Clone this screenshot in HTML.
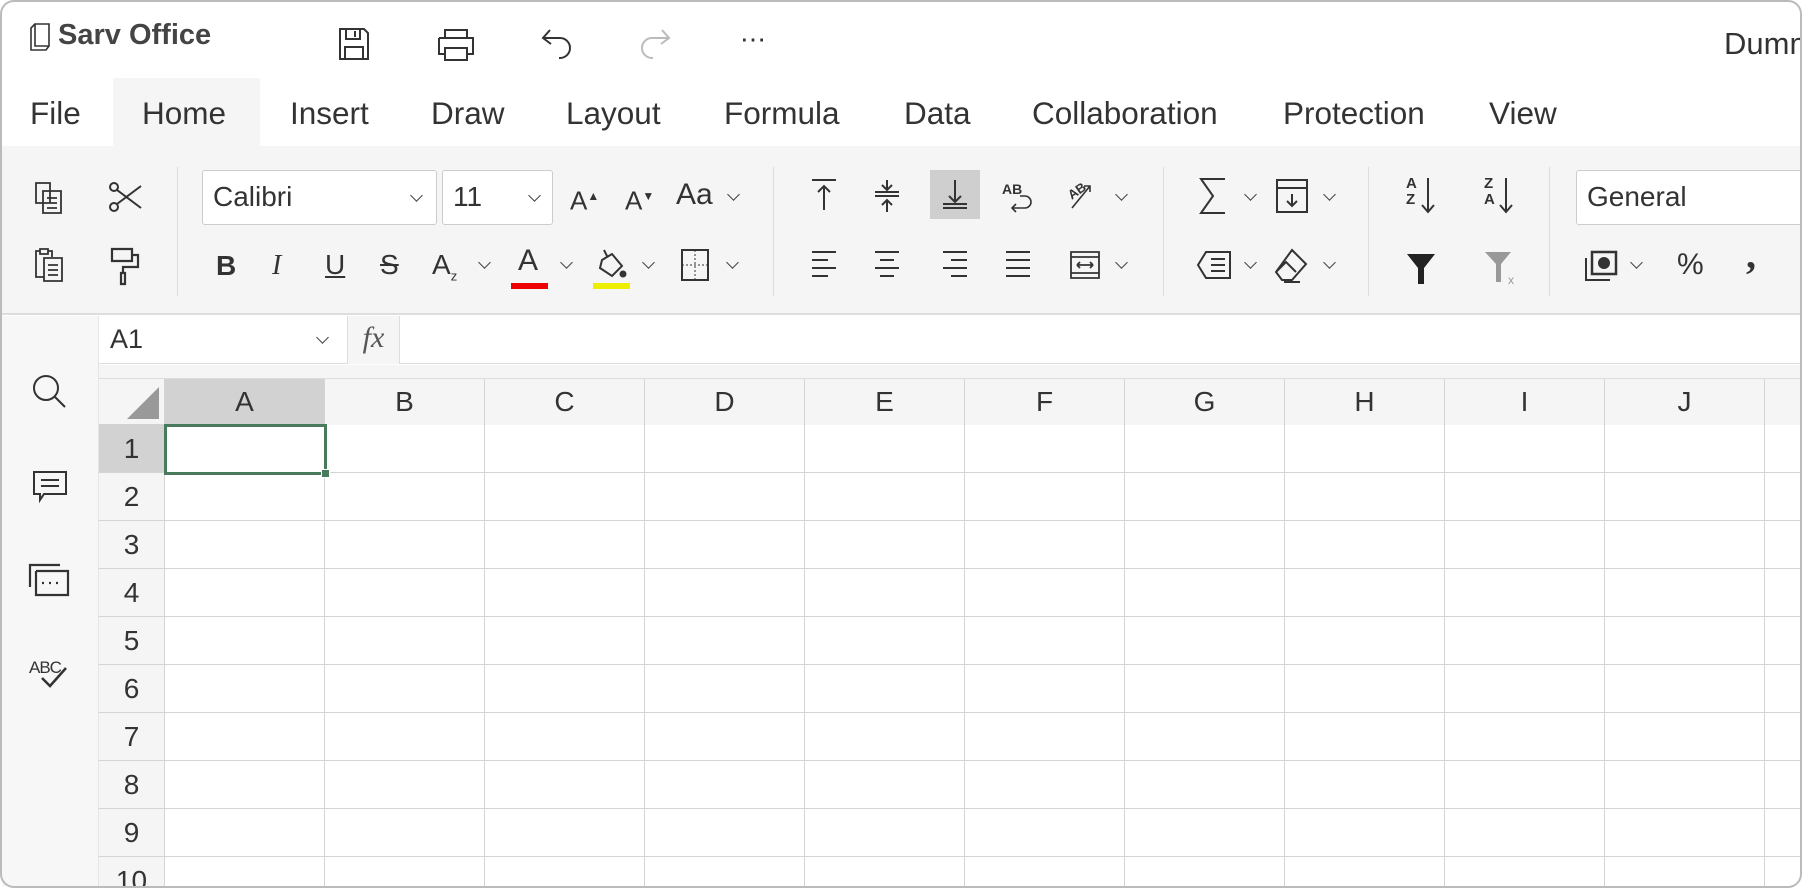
<!DOCTYPE html>
<html><head><meta charset="utf-8"><style>
*{margin:0;padding:0;box-sizing:border-box}
html,body{width:1802px;height:888px;overflow:hidden}
body{background:#fff;position:relative;font-family:"Liberation Sans",Arial,sans-serif;color:#333}
.a{position:absolute}
.menu{position:absolute;top:94px;font-size:31.5px;color:#333;line-height:38px}
svg{position:absolute;overflow:visible}
.ic{fill:none;stroke:#333;stroke-width:2}
.chev{position:absolute;width:9px;height:9px;border-right:1.6px solid #444;border-bottom:1.6px solid #444;transform:rotate(45deg)}
.ch{position:absolute;font-size:26px;line-height:30px}
.col{position:absolute;top:379px;height:46px;border-right:1px solid #d4d4d4;background:#f5f5f5;font-size:28px;text-align:center;line-height:46px;color:#333}
.row{position:absolute;left:99px;width:66px;height:48px;border-bottom:1px solid #d4d4d4;background:#f5f5f5;font-size:28px;text-align:center;line-height:48px;color:#333;border-right:1px solid #d4d4d4;overflow:hidden}
.sep{position:absolute;top:167px;width:1px;height:129px;background:#ddd}
</style></head><body>

<!-- title row -->
<svg style="left:30px;top:22px" width="26" height="30" class="ic"><path d="M5 2h14v22H5zM5 2L1 6v22h15l3-4" stroke-width="1.6"/></svg>
<div class="a" style="left:58px;top:19px;font-size:29px;font-weight:bold;color:#444">Sarv Office</div>
<svg style="left:338px;top:27px" width="32" height="34" class="ic"><path d="M2 2h24l4 4v26H2zM8 2v10h14V2M7 32V20h18v12M17 4v6"/></svg>
<svg style="left:437px;top:28px" width="38" height="34" class="ic"><path d="M8 10V2h22v8M2 10h34v16h-6M8 26H2V10M8 20h22v12H8z"/></svg>
<svg style="left:540px;top:28px" width="34" height="36" class="ic"><path d="M10 2L3 10l8 6M3 10h17a10 10 0 0 1 0 20h-1"/></svg>
<svg style="left:638px;top:28px" width="34" height="36" class="ic"><path d="M24 2l7 8-8 6M31 10H14a10 10 0 0 0 0 20h1" stroke="#bbb"/></svg>
<div class="a" style="left:740px;top:24px;font-size:26px">⋯</div>
<div class="a" style="left:1724px;top:26px;font-size:31px">Dummy</div>

<!-- menu -->
<div class="a" style="left:113px;top:78px;width:147px;height:69px;background:#f5f5f5"></div>
<div class="menu" style="left:30px">File</div>
<div class="menu" style="left:142px">Home</div>
<div class="menu" style="left:290px">Insert</div>
<div class="menu" style="left:431px">Draw</div>
<div class="menu" style="left:566px">Layout</div>
<div class="menu" style="left:724px">Formula</div>
<div class="menu" style="left:904px">Data</div>
<div class="menu" style="left:1032px">Collaboration</div>
<div class="menu" style="left:1283px">Protection</div>
<div class="menu" style="left:1489px">View</div>

<!-- toolbar -->
<div class="a" style="left:2px;top:146px;width:1800px;height:169px;background:#f5f5f5;border-bottom:2px solid #ddd"></div>
<div class="sep" style="left:177px"></div><div class="sep" style="left:773px"></div><div class="sep" style="left:1163px"></div><div class="sep" style="left:1368px"></div><div class="sep" style="left:1549px"></div>

<!-- row1 -->
<svg style="left:34px;top:181px" width="32" height="34" class="ic"><path d="M2 2h14v20H2zM9 10h18v22H9zM13 17h10M13 22h10M13 27h10" stroke-width="1.8"/></svg>
<svg style="left:108px;top:180px" width="36" height="34" class="ic"><circle cx="6" cy="7" r="4"/><circle cx="6" cy="27" r="4"/><path d="M9 10l24 18M9 24L33 6"/></svg>
<div class="a" style="left:202px;top:170px;width:235px;height:55px;background:#fff;border:1.5px solid #ccc;border-radius:3px;font-size:28px;line-height:52px;padding-left:10px">Calibri</div>
<div class="chev" style="left:412px;top:191px"></div>
<div class="a" style="left:442px;top:170px;width:111px;height:55px;background:#fff;border:1.5px solid #ccc;border-radius:3px;font-size:28px;line-height:52px;padding-left:10px">11</div>
<div class="chev" style="left:530px;top:191px"></div>
<div class="ch" style="left:570px;top:181px">A<sup style="font-size:12px">▲</sup></div>
<div class="ch" style="left:625px;top:181px">A<sup style="font-size:12px">▼</sup></div>
<div class="ch" style="left:676px;top:180px;font-size:30px">Aa</div><div class="chev" style="left:729px;top:190px"></div>
<svg style="left:810px;top:178px" width="28" height="34" class="ic"><path d="M2 2h24M14 32V8M8 14l6-6 6 6"/></svg>
<svg style="left:873px;top:178px" width="28" height="36" class="ic"><path d="M2 18h24M2 14h24M14 2v10M9 7l5 5 5-5M14 34V22M9 27l5-5 5 5"/></svg>
<div class="a" style="left:930px;top:170px;width:50px;height:49px;background:#cfcfcf"></div>
<svg style="left:941px;top:178px" width="28" height="34" class="ic"><path d="M2 30h24M2 26h24M14 2v22M8 18l6 6 6-6"/></svg>
<div class="a" style="left:1002px;top:181px;font-size:14px;font-weight:bold">AB</div>
<svg style="left:1006px;top:194px" width="26" height="22" class="ic"><path d="M14 2h5a6 6 0 0 1 0 12H6M10 10l-4 4 4 4" stroke-width="1.6"/></svg>
<svg style="left:1068px;top:178px" width="30" height="36" class="ic"><path d="M4 30L22 8M16 8h6v6" stroke-width="1.6"/><text x="0" y="18" font-size="13" fill="#333" stroke="none" transform="rotate(-35 8 14)" font-weight="bold">AB</text></svg>
<div class="chev" style="left:1117px;top:190px"></div>
<svg style="left:1199px;top:177px" width="28" height="38" class="ic"><path d="M26 2H2l12 17L2 36h24"/></svg><div class="chev" style="left:1246px;top:190px"></div>
<svg style="left:1275px;top:178px" width="34" height="36" class="ic"><path d="M2 2h30v32H2zM2 10h30M17 16v12M12 23l5 5 5-5"/></svg><div class="chev" style="left:1325px;top:190px"></div>
<div class="a" style="left:1406px;top:176px;font-size:15px;line-height:16px;font-weight:bold">A<br>Z</div>
<svg style="left:1420px;top:176px" width="16" height="40" class="ic"><path d="M8 2v34M2 29l6 7 6-7"/></svg>
<div class="a" style="left:1484px;top:176px;font-size:15px;line-height:16px;font-weight:bold">Z<br>A</div>
<svg style="left:1498px;top:176px" width="16" height="40" class="ic"><path d="M8 2v34M2 29l6 7 6-7"/></svg>
<div class="a" style="left:1576px;top:170px;width:230px;height:55px;background:#fff;border:1.5px solid #ccc;border-radius:3px;font-size:28px;line-height:52px;padding-left:10px">General</div>

<!-- row2 -->
<svg style="left:34px;top:247px" width="32" height="36" class="ic"><path d="M6 4H2v26h8M6 2h8v5H6zM14 4h4v6M10 11h18v23H10zM14 18h10M14 23h10M14 28h10" stroke-width="1.8"/></svg>
<svg style="left:110px;top:247px" width="32" height="38" class="ic"><path d="M2 2h20v12H2zM22 8h6v12H13v6M11 26h4v11h-4z" stroke-width="2.2"/></svg>
<div class="ch" style="left:216px;top:251px;font-weight:bold;font-size:28px">B</div>
<div class="ch" style="left:272px;top:251px;font-style:italic;font-size:28px;font-family:'Liberation Serif',serif">I</div>
<div class="ch" style="left:325px;top:250px;font-size:28px;text-decoration:underline">U</div>
<div class="ch" style="left:380px;top:250px;font-size:28px;text-decoration:line-through">S</div>
<div class="ch" style="left:432px;top:250px;font-size:28px">A<sub style="font-size:13px">z</sub></div><div class="chev" style="left:480px;top:258px"></div>
<div class="ch" style="left:518px;top:246px;font-size:30px">A</div>
<div class="a" style="left:511px;top:283px;width:37px;height:6px;background:#e00"></div><div class="chev" style="left:562px;top:258px"></div>
<svg style="left:596px;top:248px" width="32" height="34" class="ic"><path d="M8 2l3 6M6 12l10-6 10 12-10 10L4 20z"/><circle cx="27" cy="26" r="2.5" fill="#333"/></svg>
<div class="a" style="left:593px;top:283px;width:37px;height:6px;background:#ee0"></div><div class="chev" style="left:644px;top:258px"></div>
<svg style="left:680px;top:248px" width="30" height="34" class="ic"><path d="M2 2h26v30H2z"/><path d="M15 2v30M2 17h26" stroke-dasharray="2 2" stroke-width="1"/></svg><div class="chev" style="left:728px;top:258px"></div>
<svg style="left:810px;top:250px" width="28" height="30" class="ic"><path d="M2 2h24M2 10h16M2 18h24M2 26h16"/></svg>
<svg style="left:873px;top:250px" width="28" height="30" class="ic"><path d="M2 2h24M7 10h14M2 18h24M7 26h14"/></svg>
<svg style="left:941px;top:250px" width="28" height="30" class="ic"><path d="M2 2h24M10 10h16M2 18h24M10 26h16"/></svg>
<svg style="left:1004px;top:250px" width="28" height="30" class="ic"><path d="M2 2h24M2 10h24M2 18h24M2 26h24"/></svg>
<svg style="left:1069px;top:250px" width="32" height="30" class="ic"><path d="M2 2h28v26H2zM2 7h28M2 23h28M8 15h16M8 15l3-3M8 15l3 3M24 15l-3-3M24 15l-3 3" stroke-width="1.8"/></svg><div class="chev" style="left:1117px;top:258px"></div>
<svg style="left:1196px;top:250px" width="36" height="30" class="ic"><path d="M10 2h24v26H10L2 15zM15 9h14M15 15h14M15 21h14"/></svg><div class="chev" style="left:1246px;top:258px"></div>
<svg style="left:1274px;top:248px" width="34" height="36" class="ic"><path d="M18 2l14 14-14 16H8l-6-8zM2 24l10-10 10 10M10 34h16"/></svg><div class="chev" style="left:1325px;top:258px"></div>
<svg style="left:1405px;top:252px" width="32" height="34"><path d="M2 2h28L19 16v16h-6V16z" fill="#222"/></svg>
<svg style="left:1483px;top:250px" width="36" height="36"><path d="M2 2h26L18 14v18h-5V14z" fill="#999"/><text x="25" y="34" font-size="12" fill="#999">x</text></svg>
<svg style="left:1584px;top:250px" width="34" height="32" class="ic"><path d="M8 2h24v22H8z" stroke-width="2.5"/><path d="M2 8v22h24"/><circle cx="20" cy="13" r="5" fill="#333"/></svg><div class="chev" style="left:1632px;top:258px"></div>
<div class="ch" style="left:1677px;top:250px;font-size:30px">%</div>
<div class="ch" style="left:1746px;top:240px;font-size:40px;font-weight:bold;font-family:'Liberation Serif',serif">,</div>

<!-- sidebar -->
<div class="a" style="left:2px;top:316px;width:97px;height:570px;background:#f7f7f7;border-right:1px solid #e5e5e5"></div>
<svg style="left:32px;top:374px" width="36" height="36" class="ic"><circle cx="14" cy="14" r="12"/><path d="M23 23l10 10"/></svg>
<svg style="left:32px;top:470px" width="36" height="34" class="ic"><path d="M2 2h32v22H12l-4 6v-6H2zM9 10h18M9 16h18"/></svg>
<svg style="left:28px;top:563px" width="42" height="36" class="ic"><path d="M2 24V2h30M8 8h32v24h-4M8 8v24h28M14 20h2M21 20h2M28 20h2" stroke-width="2.2"/></svg>
<div class="a" style="left:29px;top:658px;font-size:17px;letter-spacing:-1px">ABC</div>
<svg style="left:40px;top:666px" width="28" height="24" class="ic"><path d="M2 12l8 8L26 2" stroke-width="2.5"/></svg>

<!-- formula bar -->
<div class="a" style="left:99px;top:316px;width:1703px;height:48px;background:#fff;border-bottom:1px solid #ddd"></div>
<div class="a" style="left:110px;top:324px;font-size:27px">A1</div>
<div class="chev" style="left:318px;top:333px"></div>
<div class="a" style="left:347px;top:316px;width:53px;height:48px;background:#f5f5f5;border-left:1px solid #ddd;border-right:1px solid #ddd;font-family:'Liberation Serif',serif;font-style:italic;font-size:30px;text-align:center;line-height:44px;color:#555">fx</div>
<div class="a" style="left:99px;top:365px;width:1703px;height:14px;background:#f5f5f5;border-bottom:1px solid #ddd"></div>

<!-- grid -->
<div class="a" style="left:99px;top:379px;width:66px;height:46px;background:#f5f5f5;border-right:1px solid #d4d4d4;border-bottom:1px solid #d4d4d4"></div>
<svg style="left:125px;top:385px" width="34" height="34"><path d="M34 2V34H2z" fill="#999"/></svg>
<div class="a" style="left:165px;top:425px;width:1637px;height:461px;
background-image:linear-gradient(to right,transparent 159px,#d4d4d4 159px,#d4d4d4 160px),linear-gradient(to bottom,transparent 47px,#d4d4d4 47px,#d4d4d4 48px);background-size:160px 48px"></div>
<div class="a" style="left:165px;top:424px;width:1637px;height:1px;background:#d4d4d4"></div>

<div class="col" style="left:165px;width:160px;background:#d2d2d2">A</div>
<div class="col" style="left:325px;width:160px">B</div>
<div class="col" style="left:485px;width:160px">C</div>
<div class="col" style="left:645px;width:160px">D</div>
<div class="col" style="left:805px;width:160px">E</div>
<div class="col" style="left:965px;width:160px">F</div>
<div class="col" style="left:1125px;width:160px">G</div>
<div class="col" style="left:1285px;width:160px">H</div>
<div class="col" style="left:1445px;width:160px">I</div>
<div class="col" style="left:1605px;width:160px">J</div>
<div class="col" style="left:1765px;width:40px"></div>

<div class="row" style="top:425px;background:#d2d2d2">1</div>
<div class="row" style="top:473px">2</div>
<div class="row" style="top:521px">3</div>
<div class="row" style="top:569px">4</div>
<div class="row" style="top:617px">5</div>
<div class="row" style="top:665px">6</div>
<div class="row" style="top:713px">7</div>
<div class="row" style="top:761px">8</div>
<div class="row" style="top:809px">9</div>
<div class="row" style="top:857px;height:29px;border-bottom:none">10</div>

<div class="a" style="left:164px;top:424px;width:163px;height:51px;border:3px solid #4a7a5e"></div>
<div class="a" style="left:321px;top:469px;width:9px;height:9px;background:#4a7a5e;border:1px solid #fff"></div>

<!-- frame -->
<div class="a" style="left:0;top:0;width:1802px;height:888px;border:2px solid #bbb;border-radius:14px;pointer-events:none"></div>
</body></html>
